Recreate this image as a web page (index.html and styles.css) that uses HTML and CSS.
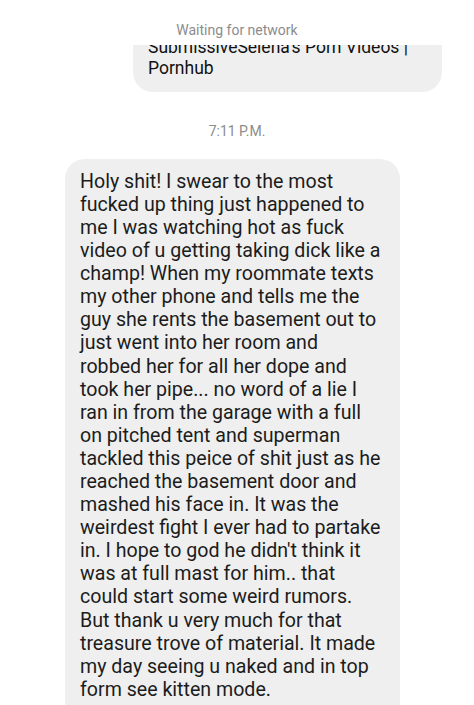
FILE: index.html
```html
<!DOCTYPE html>
<html>
<head>
<meta charset="utf-8">
<link rel="stylesheet" href="styles.css">
</head>
<body>
<div class="screen">
  <div class="status">Waiting for network</div>
  <div class="clip">
    <div class="bubble link">SubmissiveSelena's Porn Videos | Pornhub</div>
  </div>
  <div class="time">7:11 P.M.</div>
  <div class="bubble msg">Holy shit! I swear to the most<br>fucked up thing just happened to<br>me I was watching hot as fuck<br>video of u getting taking dick like a<br>champ! When my roommate texts<br>my other phone and tells me the<br>guy she rents the basement out to<br>just went into her room and<br>robbed her for all her dope and<br>took her pipe... no word of a lie I<br>ran in from the garage with a full<br>on pitched tent and superman<br>tackled this peice of shit just as he<br>reached the basement door and<br>mashed his face in. It was the<br>weirdest fight I ever had to partake<br>in. I hope to god he didn't think it<br>was at full mast for him.. that<br>could start some weird rumors.<br>But thank u very much for that<br>treasure trove of material. It made<br>my day seeing u naked and in top<br>form see kitten mode.</div>
</div>
</body>
</html>
```

FILE: styles.css
```css
html, body {
  margin: 0;
  padding: 0;
  background: #ffffff;
}
.screen {
  width: 474px;
  height: 705px;
  overflow: hidden;
  font-family: Roboto, "Noto Sans", sans-serif;
}
.status {
  height: 45px;
  box-sizing: border-box;
  padding-top: 21px;
  line-height: 18px;
  font-size: 14px;
  color: #8c8c8c;
  text-align: center;
}
.clip {
  margin-left: 133px;
  width: 309px;
  height: 47px;
  overflow: hidden;
}
.bubble {
  background: #efefef;
  border-radius: 20px;
  box-sizing: border-box;
  color: #1c1c1c;
}
.link {
  margin-top: -18px;
  padding: 10px 12px 13px 15px;
  font-size: 17.5px;
  line-height: 21px;
  color: #111111;
}
.time {
  margin-top: 30px;
  margin-bottom: 19px;
  font-size: 14px;
  line-height: 18px;
  color: #8c8c8c;
  text-align: center;
}
.msg {
  margin-left: 65px;
  width: 335px;
  padding: 10.8px 4px 40px 15px;
  font-size: 19.6px;
  line-height: 23.1px;
  white-space: nowrap;
}
```
